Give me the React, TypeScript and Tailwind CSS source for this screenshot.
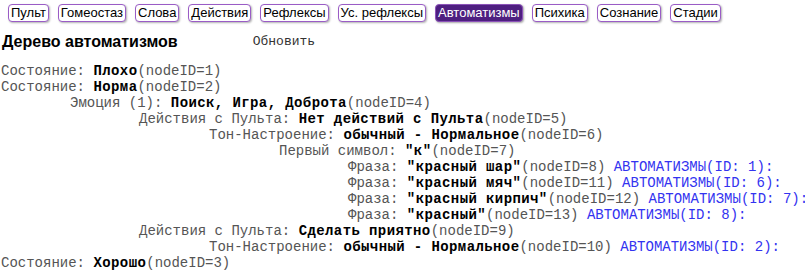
const tabs = [
  "Пульт",
  "Гомеостаз",
  "Слова",
  "Действия",
  "Рефлексы",
  "Ус. рефлексы",
  "Автоматизмы",
  "Психика",
  "Сознание",
  "Стадии",
];

type Node = {
  level: number;
  label: string;
  value: string;
  id: number;
  auto?: number;
};

const nodes: Node[] = [
  { level: 0, label: "Состояние:", value: "Плохо", id: 1 },
  { level: 0, label: "Состояние:", value: "Норма", id: 2 },
  { level: 1, label: "Эмоция (1):", value: "Поиск, Игра, Доброта", id: 4 },
  { level: 2, label: "Действия с Пульта:", value: "Нет действий с Пульта", id: 5 },
  { level: 3, label: "Тон-Настроение:", value: "обычный - Нормальное", id: 6 },
  { level: 4, label: "Первый символ:", value: "\"к\"", id: 7 },
  { level: 5, label: "Фраза:", value: "\"красный шар\"", id: 8, auto: 1 },
  { level: 5, label: "Фраза:", value: "\"красный мяч\"", id: 11, auto: 6 },
  { level: 5, label: "Фраза:", value: "\"красный кирпич\"", id: 12, auto: 7 },
  { level: 5, label: "Фраза:", value: "\"красный\"", id: 13, auto: 8 },
  { level: 2, label: "Действия с Пульта:", value: "Сделать приятно", id: 9 },
  { level: 3, label: "Тон-Настроение:", value: "обычный - Нормальное", id: 10, auto: 2 },
  { level: 0, label: "Состояние:", value: "Хорошо", id: 3 },
];

const indents = ["pl-[1px]", "pl-[70px]", "pl-[139px]", "pl-[209px]", "pl-[279px]", "pl-[348px]"];

const App = () => {
  return (
    <div className="w-[805px] h-[273px] overflow-hidden bg-white text-[#222]">
      <nav className="flex gap-[9px] pl-[8px] pt-[4px] font-['Liberation_Sans',Arial,sans-serif] text-[13px]">
        {tabs.map((t) =>
          t === "Автоматизмы" ? (
            <span
              key={t}
              className="px-[2px] leading-[16px] border border-[#8b52b8] rounded-[4px] bg-[#4e1f80] text-white shadow-[1px_1px_2px_rgba(0,0,0,0.35)]"
            >
              {t}
            </span>
          ) : (
            <span
              key={t}
              className="px-[2px] leading-[16px] border border-[#9a5cc6] rounded-[4px] bg-white text-black shadow-[1px_1px_2px_rgba(0,0,0,0.3)]"
            >
              {t}
            </span>
          )
        )}
      </nav>

      <div className="flex items-end mt-[10px] pl-[2px]">
        <h2 className="font-['Liberation_Sans',Arial,sans-serif] font-bold text-[16px] leading-[20px] text-black">
          Дерево автоматизмов
        </h2>
        <span className="ml-[75px] font-['Liberation_Mono','Courier_New',monospace] text-[13px] leading-[20px] text-[#333]">
          Обновить
        </span>
      </div>

      <div className="mt-[11px] font-['Liberation_Mono','Courier_New',monospace] text-[14px] leading-[16px] whitespace-pre">
        {nodes.map((n) => (
          <div key={n.id} className={indents[n.level]}>
            <span className="text-[#555]">{n.label} </span>
            <b className="text-black tracking-[0.4px]">{n.value}</b>
            <span className="text-[#555]">(nodeID={n.id})</span>
            {n.auto !== undefined && (
              <span className="text-[#3333f0]"> АВТОМАТИЗМЫ(ID: {n.auto}):</span>
            )}
          </div>
        ))}
      </div>
    </div>
  );
};

export default App;
